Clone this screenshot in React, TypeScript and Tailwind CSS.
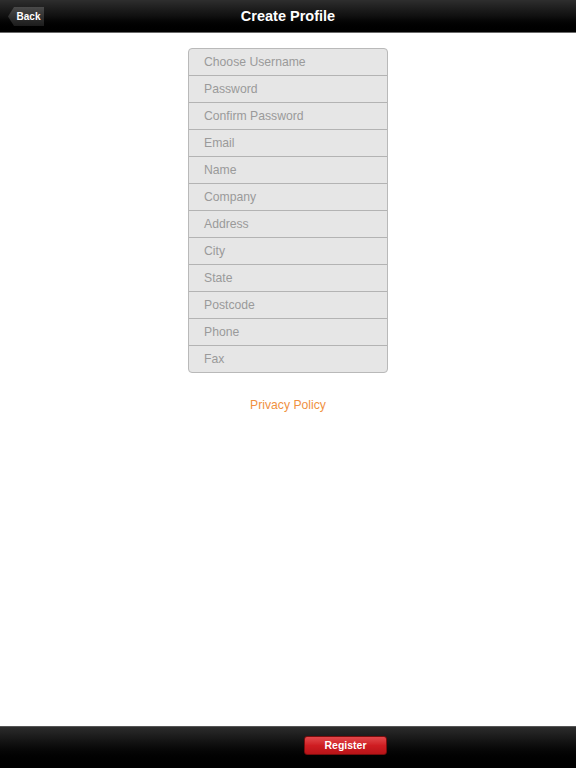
const fields = [
  "Choose Username",
  "Password",
  "Confirm Password",
  "Email",
  "Name",
  "Company",
  "Address",
  "City",
  "State",
  "Postcode",
  "Phone",
  "Fax",
];

function App() {
  return (
    <div className="flex h-[768px] w-[576px] flex-col bg-white font-['Liberation_Sans',Arial,sans-serif]">
      {/* top bar */}
      <div className="relative flex h-[33px] shrink-0 items-center justify-center border-b border-[#6a6a6a] bg-gradient-to-b from-[#2e2e2e] via-[#101010] to-black pt-[2px]">
        <div className="absolute left-[8px] top-[7px] h-[19px] w-[36px] bg-gradient-to-b from-[#4a4a4a] to-[#1c1c1c] [clip-path:polygon(6px_0,100%_0,100%_100%,6px_100%,0_50%)]">
          <span className="flex h-full items-center justify-center pl-[5px] text-[10px] font-bold text-white">
            Back
          </span>
        </div>
        <h1 className="text-[14.5px] font-bold text-white">Create Profile</h1>
      </div>

      {/* form */}
      <div className="flex flex-1 flex-col items-center pt-[15px]">
        <div className="w-[200px] overflow-hidden rounded-[4px] border border-[#b9b9b9] bg-[#e6e6e6]">
          {fields.map((f, i) => (
            <div
              key={f}
              className={
                "flex items-center pl-[15px] text-[12.2px] text-[#9a9a9a] " +
                (i > 0 ? "h-[27px] border-t border-[#b3b3b3]" : "h-[26px]")
              }
            >
              {f}
            </div>
          ))}
        </div>
        <a className="mt-[23px] text-[12.2px] text-[#f0913f]">Privacy Policy</a>
      </div>

      {/* bottom bar */}
      <div className="flex h-[42px] shrink-0 items-center justify-center border-t border-[#555] bg-gradient-to-b from-[#2c2c2c] via-[#0a0a0a] via-50% to-black pb-[4px]">
        <button className="ml-[115px] h-[19px] w-[83px] rounded-[3px] border border-[#7a0d0d] bg-gradient-to-b from-[#e2474b] via-[#cf1d22] to-[#b81418] text-[10.5px] font-bold text-white">
          Register
        </button>
      </div>
    </div>
  );
}

export default App;
